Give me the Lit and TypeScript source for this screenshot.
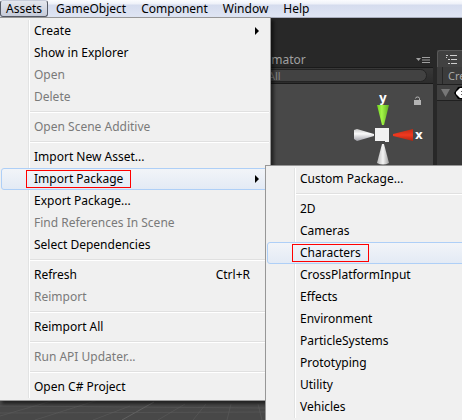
import { LitElement, html, css, svg, nothing } from "lit";
import { customElement, property } from "lit/decorators.js";

interface Entry {
  label: string;
  shortcut?: string;
  disabled?: boolean;
  open?: boolean;
  hot?: boolean;
  marked?: boolean;
  children?: (Entry | null)[];
}

const SEP = null;

const importPackage: (Entry | null)[] = [
  { label: "Custom Package..." },
  SEP,
  { label: "2D" },
  { label: "Cameras" },
  { label: "Characters", hot: true, marked: true },
  { label: "CrossPlatformInput" },
  { label: "Effects" },
  { label: "Environment" },
  { label: "ParticleSystems" },
  { label: "Prototyping" },
  { label: "Utility" },
  { label: "Vehicles" },
];

const assets: (Entry | null)[] = [
  { label: "Create", children: [] },
  { label: "Show in Explorer" },
  { label: "Open", disabled: true },
  { label: "Delete", disabled: true },
  SEP,
  { label: "Open Scene Additive", disabled: true },
  SEP,
  { label: "Import New Asset..." },
  { label: "Import Package", open: true, hot: true, marked: true, children: importPackage },
  { label: "Export Package..." },
  { label: "Find References In Scene", disabled: true },
  { label: "Select Dependencies" },
  SEP,
  { label: "Refresh", shortcut: "Ctrl+R" },
  { label: "Reimport", disabled: true },
  SEP,
  { label: "Reimport All" },
  SEP,
  { label: "Run API Updater...", disabled: true },
  SEP,
  { label: "Open C# Project" },
];

@customElement("popup-menu")
class PopupMenu extends LitElement {
  @property({ attribute: false }) entries: (Entry | null)[] = [];

  static styles = css`
    :host {
      display: block;
      box-sizing: border-box;
      background: #f0f0f0;
      border: 1px solid #979797;
      box-shadow: 3px 3px 3px rgba(0, 0, 0, 0.5);
    }
    .list {
      margin: 2px 1px;
      padding: 0;
      list-style: none;
      background: linear-gradient(90deg, transparent 27px, #e2e3e3 27px 28px, #fff 28px 29px, transparent 29px);
    }
    .row {
      position: relative;
    }
    .sep {
      height: 8px;
      padding-left: 29px;
      box-sizing: border-box;
      display: flex;
      align-items: center;
    }
    .sep::before {
      content: "";
      flex: 1;
      border-top: 1px solid #e0e0e0;
      border-bottom: 1px solid #fff;
    }
    .item {
      display: flex;
      align-items: center;
      width: 100%;
      height: 22px;
      box-sizing: border-box;
      margin: 0;
      padding: 0 9px 0 24px;
      border: 1px solid transparent;
      border-radius: 3px;
      background: none;
      color: #000;
      font: 12px/16px "Noto Sans", "Open Sans", sans-serif;
      text-align: left;
      white-space: nowrap;
    }
    .item:disabled {
      color: #7a7a7a;
    }
    .hot {
      border-color: #aecff7;
      background: linear-gradient(rgba(242, 245, 249, 0.9), rgba(224, 233, 246, 0.8));
    }
    .label {
      padding: 0 7px;
      border: 1px solid transparent;
    }
    .marked {
      border-color: #f00;
    }
    .shortcut {
      margin-left: auto;
      padding-right: 9px;
    }
    .arrow {
      margin-left: auto;
      width: 4px;
      height: 8px;
      fill: #000;
    }
    .sub {
      position: absolute;
      left: calc(100% - 4px);
      top: -3px;
      width: 220px;
    }
  `;

  render() {
    return html`<ul class="list" role="menu">
      ${this.entries.map((e) =>
        e === null
          ? html`<li class="sep" role="separator"></li>`
          : html`<li class="row" role="none">
              <button class="item ${e.hot ? "hot" : ""}" role="menuitem" ?disabled=${e.disabled}>
                <span class="label ${e.marked ? "marked" : ""}">${e.label}</span>
                ${e.shortcut ? html`<span class="shortcut">${e.shortcut}</span>` : nothing}
                ${e.children
                  ? html`<svg class="arrow" viewBox="0 0 4 8"><path d="M0 0L4 4L0 8Z" /></svg>`
                  : nothing}
              </button>
              ${e.open ? html`<popup-menu class="sub" .entries=${e.children}></popup-menu>` : nothing}
            </li>`
      )}
    </ul>`;
  }
}

@customElement("app-root")
class AppRoot extends LitElement {
  static styles = css`
    :host {
      display: flex;
      flex-direction: column;
      height: 100vh;
      overflow: hidden;
      background: #282828;
      font: 12px/16px "Noto Sans", "Open Sans", sans-serif;
    }
    .bar {
      position: relative;
      z-index: 1;
      display: flex;
      gap: 1px;
      height: 18px;
      box-sizing: border-box;
      border-bottom: 1px solid #a8adbd;
      background: linear-gradient(#fbfcfe, #eef1f8 4px, #d5dcee 5px, #dfe5f3);
    }
    .top {
      height: 17px;
      margin: 0;
      padding: 0 6px;
      border: 1px solid transparent;
      background: none;
      color: #000;
      font: inherit;
      line-height: 15px;
    }
    .pressed {
      padding: 0 5px;
      border-color: #555a66;
      border-top-color: transparent;
      border-radius: 3px;
      background: linear-gradient(#e4e7ee, #c6cbd9);
    }
    .drop {
      position: absolute;
      left: -1px;
      top: 17px;
      width: 272px;
    }
    .editor {
      flex: 1;
      display: flex;
      gap: 4px;
      padding-top: 32px;
      min-height: 0;
    }
    .scene {
      flex: 1;
      display: flex;
      flex-direction: column;
      min-width: 0;
    }
    .tabs {
      display: flex;
      align-items: center;
      height: 17px;
      box-sizing: border-box;
      padding: 3px 3px 0 253px;
      color: #a0a0a0;
    }
    .options {
      margin-left: auto;
      width: 14px;
      height: 6px;
    }
    .tools {
      display: flex;
      align-items: center;
      height: 17px;
      box-sizing: border-box;
      padding: 0 6px 0 256px;
      border-top: 1px solid #1a1a1a;
      border-bottom: 1px solid #1a1a1a;
      background: linear-gradient(#383838, #2c2c2c);
    }
    .search {
      flex: 1;
      min-width: 0;
      height: 13px;
      box-sizing: border-box;
      padding: 0 11px;
      border: 1px solid #242424;
      border-radius: 7px;
      background: #424242;
      font: 11px/11px "Noto Sans", sans-serif;
    }
    .search::placeholder {
      color: #868686;
      opacity: 1;
    }
    .view {
      position: relative;
      flex: 1;
      display: flex;
      align-items: flex-start;
      justify-content: flex-end;
      background: #484848;
      overflow: hidden;
    }
    .floor {
      position: absolute;
      left: 0;
      bottom: 0;
      width: 462px;
      height: 20px;
      stroke: #606060;
      fill: none;
    }
    .gizmo {
      width: 80px;
      height: 84px;
    }
    .axis {
      font: bold 12px "DejaVu Sans", sans-serif;
      fill: #fff;
    }
    .side {
      width: 25px;
      overflow: hidden;
      background: #383838;
      color: #a8a8a8;
    }
    .sidetab,
    .sidetools,
    .siderow {
      display: flex;
      align-items: center;
      height: 17px;
      box-sizing: border-box;
      white-space: nowrap;
    }
    .sidetab {
      gap: 5px;
      padding-left: 8px;
      border-left: 1px solid #585858;
      border-top: 1px solid #585858;
      border-radius: 3px 0 0 0;
      background: #414141;
    }
    .sidetools {
      margin-left: 5px;
      padding-left: 5px;
      border-left: 1px solid #262626;
      box-shadow: -5px 0 #3c3c3c;
      background: #3c3c3c;
      font-size: 11px;
    }
    .siderow {
      gap: 4px;
      padding-left: 4px;
      border-top: 1px solid #202020;
      border-bottom: 1px solid #202020;
      background: #414141;
    }
    .glyph {
      flex: none;
    }
  `;

  render() {
    return html`
      <nav class="bar" aria-label="Main menu">
        <button class="top pressed">Assets</button>
        <button class="top">GameObject</button>
        <button class="top">Component</button>
        <button class="top">Window</button>
        <button class="top">Help</button>
        <popup-menu class="drop" .entries=${assets}></popup-menu>
      </nav>
      <main class="editor">
        <section class="scene">
          <div class="tabs">
            <span>Animator</span>
            <svg class="options" viewBox="0 0 14 6">
              <path d="M0 1H5L2.5 4Z" fill="#a0a0a0" />
              <path d="M6 .5H14M6 3H14M6 5.5H14" stroke="#a0a0a0" />
            </svg>
          </div>
          <div class="tools"><input class="search" placeholder="All" aria-label="Search scene" /></div>
          <div class="view">
            <svg class="floor" viewBox="0 0 462 20">
              <path d="M0 16L55 0M35 20L98 0M93 20L130 6M158 20L185 4M193 20L206 4M227 20L231 4M262 20L258 4M0 6L265 8M0 13L265 12" opacity=".5" />
              <path d="M122 20L154 2" />
            </svg>
            ${this.gizmo()}
          </div>
        </section>
        <aside class="side">
          <div class="sidetab">
            <svg class="glyph" width="11" height="9" viewBox="0 0 11 9" stroke="#d0d0d0">
              <path d="M0 .5H2M4 .5H11M2 4.5H4M5 4.5H11M2 8.5H4M5 8.5H11M.5 2V3" />
            </svg>
            <span>Hierarchy</span>
          </div>
          <div class="sidetools">Create</div>
          <div class="siderow">
            <svg class="glyph" width="9" height="8" viewBox="0 0 9 8"><path d="M0 0H9L4.500 8Z" fill="#777" /></svg>
            <svg class="glyph" width="14" height="14" viewBox="0 0 14 14">
              <path d="M0 7L4 1L12 0L14 7L12 14L4 13Z" fill="#000" />
              <path d="M2 6L6 2H10L7 6H14V8H7L10 12H6L2 8Z" fill="#fff" />
            </svg>
          </div>
        </aside>
      </main>
    `;
  }

  private gizmo() {
    return svg`<svg class="gizmo" viewBox="353 84 80 84">
      <defs>
        <linearGradient id="g"><stop offset="0" stop-color="#6fd21e" /><stop offset=".4" stop-color="#a4f648" /><stop offset="1" stop-color="#5fae20" /></linearGradient>
        <linearGradient id="w"><stop offset="0" stop-color="#b8b8b8" /><stop offset=".5" stop-color="#f4f4f4" /><stop offset="1" stop-color="#a0a0a0" /></linearGradient>
        <linearGradient id="v" x2="0" y2="1"><stop offset="0" stop-color="#c8c8c8" /><stop offset=".4" stop-color="#fafafa" /><stop offset="1" stop-color="#a0a0a8" /></linearGradient>
        <linearGradient id="r" x2="0" y2="1"><stop offset="0" stop-color="#c02a14" /><stop offset=".5" stop-color="#f03a20" /><stop offset="1" stop-color="#b02410" /></linearGradient>
      </defs>
      <text class="axis" x="379" y="102">y</text>
      <text class="axis" x="415" y="139">x</text>
      <path d="M377 105H389L384 125H382Z" fill="url(#g)" />
      <path d="M413 129V141L393 136V134Z" fill="url(#r)" />
      <path d="M354 130L357 129L374 134V136L357 141L354 139Z" fill="url(#v)" />
      <path d="M382 144H384L389 163Q383 166 377 163Z" fill="url(#w)" />
      <path d="M375 128H389V142H385V141H375Z" fill="#f2f2f2" />
      <path d="M414 100H421V105H414Z" fill="#b4b4b4" />
      <path d="M415.500 98.500Q415.500 97 417.500 97T419.500 98.500V101" fill="none" stroke="#b4b4b4" />
    </svg>`;
  }
}
